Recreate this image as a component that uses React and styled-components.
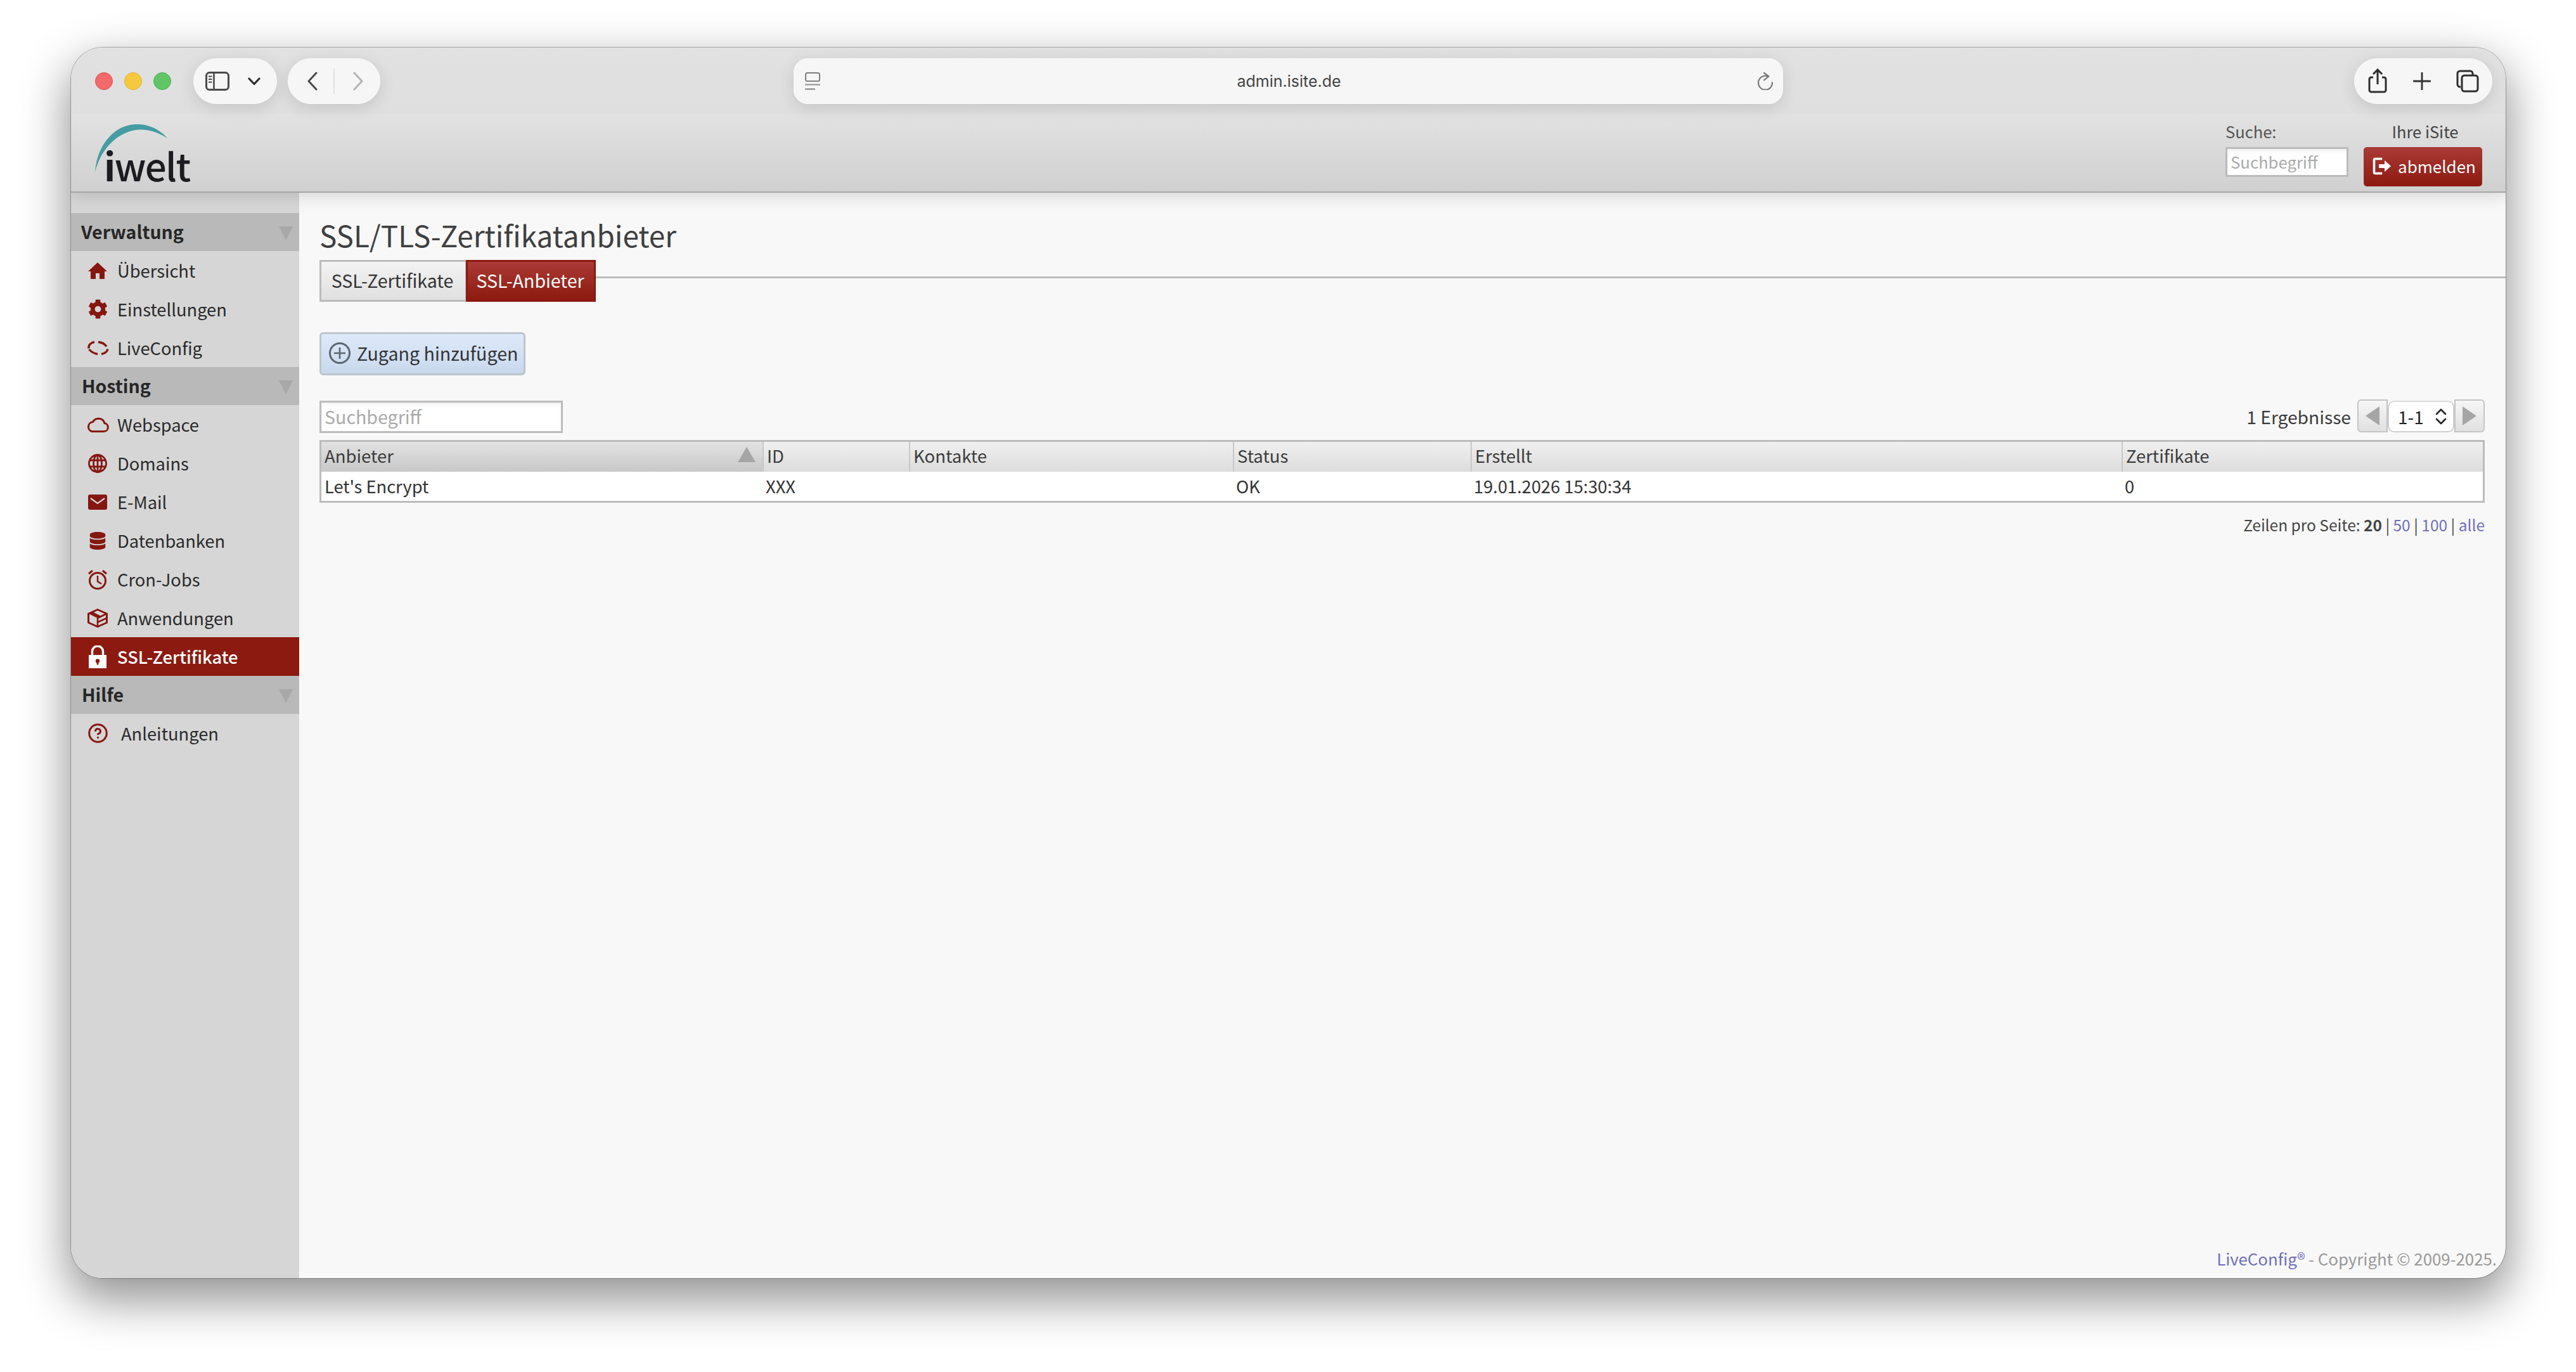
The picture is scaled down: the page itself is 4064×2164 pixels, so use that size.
import React from 'react';
import styled, { createGlobalStyle } from 'styled-components';
import { FaCog, FaDatabase } from 'react-icons/fa';
import { CircleHelp } from 'lucide-react';

const FONT = '"Noto Sans CJK SC", "Noto Sans", sans-serif';
const RED = '#8d1a10';
const ICON = '#851710';

const Global = createGlobalStyle`
  html, body { margin: 0; padding: 0; background: #fff; }
  body { font-family: ${FONT}; color: #333; }
  * { box-sizing: border-box; }
`;

const Desktop = styled.div`
  width: 4064px;
  height: 2164px;
  padding: 75px 111px 148px 112px;
  background: #fff;
  overflow: hidden;
`;
const Window = styled.div`
  width: 100%;
  height: 100%;
  display: flex;
  flex-direction: column;
  border-radius: 50px;
  overflow: hidden;
  background: #f8f8f8;
  box-shadow: 0 0 0 1px rgba(0,0,0,.28), 0 30px 72px 6px rgba(0,0,0,.42);
`;
const Top = styled.header`
  height: 229px;
  flex: none;
  background: linear-gradient(#e1e1e1 0, #dfdfdf 105px, #e2e2e2 105px, #d0d0d0 100%);
  border-bottom: 2px solid #a6a6a6;
  display: flex;
  flex-direction: column;
  position: relative;
  z-index: 2;
  box-shadow: 0 6px 24px rgba(0,0,0,.13);
`;
const BrowserBar = styled.div`
  display: grid;
  grid-template-columns: 1fr 1561px 1fr;
  align-items: center;
  padding: 17px 21px 0 21px;
  height: 89px;
  flex: none;
`;
const LeftCluster = styled.div`display: flex; align-items: center; padding-left: 17px;`;
const Light = styled.span`
  width: 28px;
  height: 28px;
  border-radius: 50%;
  margin-right: 18px;
  background: ${p => p.$c};
  border: 1px solid ${p => p.$b};
`;
const Pill = styled.div`
  height: 72px;
  width: ${p => p.$w}px;
  margin-left: ${p => p.$ml || 0}px;
  border-radius: 36px;
  background: #f6f6f6;
  border: 1.5px solid #fbfbfb;
  box-shadow: 0 6px 26px rgba(0,0,0,.12);
  display: flex;
  align-items: center;
  position: relative;
  flex: none;
`;
const UrlBar = styled(Pill)`
  width: 1561px;
  border-radius: 22px;
  justify-content: space-between;
  padding: 0 15px 0 17px;
`;
const UrlText = styled.span`
  font: 400 25px/30px Inter, sans-serif;
  color: #444;
`;
const RightPill = styled(Pill)`
  justify-self: end;
  justify-content: space-between;
  padding: 0 20px 0 20px;
`;
const Divider = styled.span`
  width: 2px;
  height: 40px;
  background: #e2e2e2;
`;
const PillSlot = styled.span`
  display: flex;
  margin-left: ${p => p.$ml}px;
`;
const SiteHeader = styled.div`
  flex: 1;
  display: flex;
  justify-content: space-between;
  padding: 0 37px 8px 38px;
  align-items: flex-end;
`;
const Logo = styled.svg`
  display: block;
  margin-bottom: -17px;
  filter: blur(.6px);
`;
const HeaderTools = styled.div`display: flex; gap: 24px; align-items: flex-start;`;
const ToolCol = styled.div`
  width: ${p => p.$w}px;
  display: flex;
  flex-direction: column;
  align-items: ${p => p.$center ? 'center' : 'flex-start'};
`;
const ToolLabel = styled.div`
  font-size: 25.5px;
  line-height: 32px;
  height: 41px;
  padding-left: ${p => p.$dark ? 7 : 0}px;
  color: ${p => p.$dark ? '#444' : '#555'};
`;
const SearchBox = styled.div`
  width: ${p => p.$w}px;
  height: ${p => p.$h}px;
  border: 3px solid #bcbcbc;
  background: #fff;
  box-shadow: inset 0 4px 5px rgba(0,0,0,.05);
  color: #aaa;
  font-size: ${p => p.$fs}px;
  line-height: ${p => p.$h - 8}px;
  padding-left: 5px;
  flex: none;
`;
const LogoutBtn = styled.div`
  width: 187px;
  height: 62px;
  border-radius: 5px;
  background: linear-gradient(#aa3a36, ${RED});
  border: 1.5px solid #a33;
  border-color: #a13a34 #952a22 #862018;
  color: #fff;
  font-size: 26px;
  display: flex;
  align-items: center;
  padding: 0 0 3px 11px;
  gap: 10px;
`;
const Body = styled.div`flex: 1; display: flex; min-height: 0;`;
const Sidebar = styled.nav`
  width: 360px;
  flex: none;
  background: #d6d6d6;
  padding-top: 32px;
`;
const GroupHead = styled.div`
  height: 60px;
  background: #b9b9b9;
  display: flex;
  align-items: center;
  justify-content: space-between;
  padding: 0 10px 3px ${p => p.$pad || 17}px;
  font-weight: 700;
  font-size: 28.5px;
  color: #262626;
`;
const HeadArrow = styled.span`
  width: 0;
  height: 0;
  border-left: 11px solid transparent;
  border-right: 11px solid transparent;
  border-top: 22px solid #a8a8a8;
  margin-top: 6px;
`;
const NavItem = styled.div`
  height: 61px;
  display: flex;
  align-items: center;
  padding-left: 26px;
  background: ${p => p.$active ? RED : 'transparent'};
  color: ${p => p.$active ? '#fff' : '#2a2a2a'};
  font-size: 27.3px;
  font-weight: ${p => p.$active ? 500 : 400};
`;
const NavLabel = styled.span`
  position: relative;
  top: -1px;
`;
const NavIcon = styled.span`
  width: 32px;
  height: 32px;
  margin-right: ${p => p.$gap || 15}px;
  display: flex;
  align-items: center;
  justify-content: center;
  flex: none;
  color: ${p => p.$active ? '#fff' : ICON};
  svg { flex: none; }
`;
const Main = styled.main`
  flex: 1;
  min-width: 0;
  display: flex;
  flex-direction: column;
  padding: 36px 33px 0 32px;
`;
const Title = styled.h1`
  margin: 0 0 10px;
  font-size: 45.8px;
  line-height: 60px;
  font-weight: 400;
  color: #3f3f3f;
`;
const TabRow = styled.div`
  display: flex;
  margin-right: -33px;
  margin-bottom: 48px;
`;
const Tab = styled.div`
  height: 66px;
  width: ${p => p.$w}px;
  text-align: center;
  font-size: 28.5px;
  line-height: 58px;
  border: 3px solid ${p => p.$active ? RED : '#bcbcbc'};
  border-right-width: ${p => p.$active ? 3 : 1.5}px;
  padding-right: ${p => p.$active ? 2 : 3}px;
  color: ${p => p.$active ? '#fff' : '#333'};
  background: ${p => p.$active ? `linear-gradient(#aa3a36, ${RED})` : 'linear-gradient(#f3f3f3, #e0e0e0)'};
`;
const TabLine = styled.div`
  flex: 1;
  height: 3px;
  margin-top: 26px;
  background: #bcbcbc;
`;
const AddBtn = styled.div`
  width: 325px;
  height: 68px;
  border: 3px solid #bcc4cc;
  border-radius: 6px;
  background: linear-gradient(#deeafa, #c8d8ec);
  display: flex;
  align-items: center;
  padding: 0 0 3px 11px;
  gap: 9px;
  font-size: 28.6px;
  color: #333;
  white-space: nowrap;
  svg { margin-top: 1px; }
`;
const ListBar = styled.div`
  display: flex;
  justify-content: space-between;
  align-items: flex-start;
  margin-top: 38px;
  height: 53px;
  margin-bottom: 11px;
`;
const SearchWrap = styled.div`padding-top: 2px;`;
const Pager = styled.div`display: flex; align-items: center; height: 52px;`;
const PagerText = styled.span`
  font-size: 28.2px;
  color: #3c3c3c;
  margin-right: 10px;
`;
const PagerBtn = styled.div`
  width: 48px;
  height: 52px;
  border: 2px solid #c4c4c4;
  border-radius: ${p => p.$left ? '6px 0 0 6px' : '0 6px 6px 0'};
  background: linear-gradient(#f6f6f6, #e0e0e0);
  display: flex;
  align-items: center;
  justify-content: center;
`;
const PagerTri = styled.span`
  width: 0;
  height: 0;
  border-top: 15px solid transparent;
  border-bottom: 15px solid transparent;
  ${p => p.$left ? 'border-right: 22px solid #a5a5a5;' : 'border-left: 22px solid #a5a5a5;'}
`;
const PagerSelect = styled.div`
  width: 105px;
  height: 50px;
  margin-top: 2px;
  background: #fff;
  border: 2px solid #cfcfcf;
  border-top-color: #d8d8d8;
  border-radius: 10px;
  display: flex;
  align-items: center;
  justify-content: space-between;
  padding: 0 10px 0 14px;
  font-size: 28px;
  color: #222;
`;
const Table = styled.div`
  border: 3px solid #bcbcbc;
  height: 99px;
  background: #fff;
`;
const Row = styled.div`
  display: grid;
  grid-template-columns: 696px 231px 511px 375px 1027px 1fr;
  height: ${p => p.$h}px;
`;
const HeadCell = styled.div`
  background: ${p => p.$sorted ? 'linear-gradient(#e2e2e2, #c8c8c8)' : 'linear-gradient(#f0f0f0, #dcdcdc)'};
  border-left: ${p => p.$first ? 0 : 2}px solid #c8c8c8;
  padding-left: 5px;
  font-size: 27.5px;
  line-height: 43px;
  color: #3c3c3c;
  display: flex;
  justify-content: space-between;
  padding-right: 11px;
`;
const SortTri = styled.span`
  width: 0;
  height: 0;
  margin-top: 8px;
  border-left: 14px solid transparent;
  border-right: 14px solid transparent;
  border-bottom: 24px solid #a5a5a5;
`;
const Cell = styled.div`
  padding-left: 5px;
  font-size: 27.3px;
  line-height: 44px;
  color: #333;
`;
const PerPage = styled.div`
  margin-top: 18px;
  text-align: right;
  font-size: 24.5px;
  line-height: 34px;
  color: #444;
`;
const PageLink = styled.span`color: #7070bb;`;
const Strong = styled.b`font-weight: 700;`;
const Copyright = styled.footer`
  margin-top: auto;
  margin-right: -19px;
  margin-bottom: 14px;
  text-align: right;
  font-size: 25.8px;
  line-height: 34px;
  color: #999;
`;

const I = ({ w, h, children, ...r }) => (
  <svg width={w} height={h} viewBox={`0 0 ${w} ${h}`} fill="none" {...r}>{children}</svg>
);

const SidebarIcon = () => (
  <I w={38} h={30}>
    <rect x="1.5" y="1.5" width="35" height="27" rx="5" stroke="#4a4a4a" strokeWidth="3" />
    <path d="M13.5 2v26" stroke="#4a4a4a" strokeWidth="2.6" />
    <path d="M5 7.5h5.5M5 12h5.5M5 16.5h5.5" stroke="#4a4a4a" strokeWidth="1.8" />
  </I>
);
const Chev = ({ d, c, w = 3, W = 20, H = 30 }) => (
  <I w={W} h={H}><path d={d} stroke={c} strokeWidth={w} strokeLinecap="round" strokeLinejoin="round" /></I>
);
const ShareIcon = () => (
  <I w={32} h={40}>
    <path d="M9 14H6a3 3 0 0 0-3 3v17a3 3 0 0 0 3 3h20a3 3 0 0 0 3-3V17a3 3 0 0 0-3-3h-3" stroke="#2e2e2e" strokeWidth="3" />
    <path d="M16 25V3M9 9l7-7 7 7" stroke="#2e2e2e" strokeWidth="3" />
  </I>
);
const PlusIcon = () => (
  <I w={28} h={28}><path d="M14 1v26M1 14h26" stroke="#333" strokeWidth="2.8" strokeLinecap="round" /></I>
);
const TabsIcon = () => (
  <I w={36} h={36}>
    <path d="M7 27H6a4 4 0 0 1-4-4V6a4 4 0 0 1 4-4h16a4 4 0 0 1 4 4v2" stroke="#2e2e2e" strokeWidth="3" />
    <rect x="9" y="9" width="25" height="25" rx="4" stroke="#2e2e2e" strokeWidth="3" />
  </I>
);
const ReaderIcon = () => (
  <I w={24} h={28}>
    <rect x="1" y="1" width="22" height="13" rx="2.5" stroke="#808080" strokeWidth="2" />
    <path d="M0 19.5h24" stroke="#909090" strokeWidth="2" />
    <path d="M0 26.5h16" stroke="#808080" strokeWidth="2" />
  </I>
);
const ReloadIcon = () => (
  <I w={24} h={28}>
    <path d="M15.5 6.2A11 11 0 1 0 23 16" stroke="#777" strokeWidth="2.2" strokeLinecap="round" />
    <path d="M10 .8 17.5 6.5 10 12.3" stroke="#777" strokeWidth="2.2" strokeLinecap="round" strokeLinejoin="round" />
  </I>
);
const LogoMark = () => (
  <Logo width="170" height="116" viewBox="0 0 170 116">
    <path d="M0 76C2 40 26 3 63 1c21-1 39 8 51 22C98 13 82 8 65 10 35 14 9 40 0 76Z" fill="#459ca3" />
    <text x="14" y="91" fontFamily='"Noto Sans CJK SC", sans-serif' fontSize="60" letterSpacing="-1.5" fill="#1b1b20"><tspan fontWeight="700">i</tspan><tspan fontWeight="500">welt</tspan></text>
  </Logo>
);
const LogoutIcon = () => (
  <I w={32} h={32}>
    <path d="M17 3H6a3 3 0 0 0-3 3v20a3 3 0 0 0 3 3h11v-3H6V6h11V3Z" fill="#fff" stroke="#fff" strokeWidth=".6" />
    <path d="M12 13h9V7l10 9-10 9v-6h-9Z" fill="#fff" />
  </I>
);
const HomeIcon = () => (
  <I w={30} h={26}><path d="M15 0 30 14h-4v12h-8v-9h-6v9H4V14H0Z" fill={ICON} /></I>
);
const GlobeIcon = () => (
  <I w={30} h={30}>
    <g stroke={ICON} strokeWidth="2.8">
      <circle cx="15" cy="15" r="13.5" />
      <ellipse cx="15" cy="15" rx="6.5" ry="13.5" />
      <path d="M2.5 10h25M2.5 20h25M15 1.5v27" />
    </g>
  </I>
);
const CloudIcon = () => (
  <I w={36} h={25}>
    <path d="M9 23.5h19a6.5 6.5 0 0 0 1-12.9A10 10 0 0 0 10.5 8.6 7.6 7.6 0 0 0 9 23.5Z" stroke={ICON} strokeWidth="3" />
  </I>
);
const MailIcon = () => (
  <I w={30} h={24}>
    <rect width="30" height="24" rx="3" fill={ICON} />
    <path d="M4 6l11 8 11-8" stroke="#d6d6d6" strokeWidth="2.2" />
  </I>
);
const LiveIcon = () => (
  <I w={36} h={24}>
    <g stroke={ICON} strokeWidth="3.4" fill="none" strokeLinecap="butt">
      <path d="M4 12.5C3 7 8 3 13 2.5" />
      <path d="M19 2.5C25 3 29 5 32 9.5" />
      <path d="M4.5 14C8 18 12 20.5 18 21.5" />
      <path d="M24 21.5C29 20.5 33 18 34 13.5" />
    </g>
  </I>
);
const ClockIcon = () => (
  <I w={30} h={32}>
    <g stroke={ICON}>
      <circle cx="15" cy="18" r="12.5" strokeWidth="3" />
      <path d="M1 7l6-5M29 7l-6-5" strokeWidth="3" />
      <path d="M15 10v9l6 4" strokeWidth="2.4" />
    </g>
  </I>
);
const BoxIcon = () => (
  <I w={32} h={30}>
    <path d="M16 1.5 30.5 8v14L16 28.5 1.5 22V8Z" stroke={ICON} strokeWidth="3" strokeLinejoin="round" />
    <path d="M16 1 2 8l14 7 6-3L10 6Z" fill={ICON} />
    <path d="M16 15v13M16 15l14-7M17 21l13-6" stroke={ICON} strokeWidth="2.6" />
  </I>
);
const LockIcon = () => (
  <I w={28} h={36}>
    <path d="M5.5 16v-6.5a8.5 8.5 0 0 1 17 0V16" stroke="#fff" strokeWidth="3.4" />
    <rect y="15" width="28" height="21" fill="#fff" />
    <circle cx="14" cy="24.5" r="3.2" fill={RED} />
    <rect x="12.6" y="24.5" width="2.8" height="6" fill={RED} />
  </I>
);
const PlusCircle = () => (
  <I w={36} h={36}>
    <circle cx="18" cy="18" r="15.5" stroke="#5d6670" strokeWidth="3" />
    <path d="M18 9v18M9 18h18" stroke="#5d6670" strokeWidth="2.6" />
  </I>
);
const UpDown = () => (
  <I w={18} h={28}>
    <path d="M2 10l7-7 7 7M2 18l7 7 7-7" stroke="#222" strokeWidth="2.6" strokeLinecap="round" strokeLinejoin="round" />
  </I>
);

const navGroups = [
  { title: 'Verwaltung', pad: 16, items: [
    { label: 'Übersicht', icon: <HomeIcon /> },
    { label: 'Einstellungen', icon: <FaCog size={31} /> },
    { label: 'LiveConfig', icon: <LiveIcon /> },
  ]},
  { title: 'Hosting', pad: 17, items: [
    { label: 'Webspace', icon: <CloudIcon /> },
    { label: 'Domains', icon: <GlobeIcon /> },
    { label: 'E-Mail', icon: <MailIcon /> },
    { label: 'Datenbanken', icon: <FaDatabase size={28} /> },
    { label: 'Cron-Jobs', icon: <ClockIcon /> },
    { label: 'Anwendungen', icon: <BoxIcon /> },
    { label: 'SSL-Zertifikate', icon: <LockIcon />, active: true },
  ]},
  { title: 'Hilfe', pad: 17, items: [
    { label: 'Anleitungen', icon: <CircleHelp size={33} strokeWidth={2.2} />, gap: 21 },
  ]},
];

const columns = ['Anbieter', 'ID', 'Kontakte', 'Status', 'Erstellt', 'Zertifikate'];
const row = ["Let's Encrypt", 'XXX', '', 'OK', '19.01.2026 15:30:34', '0'];

export default function App() {
  return (
    <>
      <Global />
      <Desktop>
        <Window>
          <Top>
            <BrowserBar>
              <LeftCluster>
                <Light $c="#f26a6a" $b="#e05050" />
                <Light $c="#f5c93e" $b="#e2b22e" />
                <Light $c="#60c566" $b="#4cb052" />
                <Pill $w={132} $ml={17}>
                  <PillSlot $ml={18}><SidebarIcon /></PillSlot>
                  <PillSlot $ml={29}><Chev W={20} H={13} w={3.2} c="#2e2e2e" d="M2 2l8 8.5L18 2" /></PillSlot>
                </Pill>
                <Pill $w={146} $ml={17}>
                  <PillSlot $ml={28}><Chev c="#4a4a4a" d="M16 2 4 15l12 13" /></PillSlot>
                  <PillSlot $ml={23}><Divider /></PillSlot>
                  <PillSlot $ml={27}><Chev c="#b4b4b4" d="M4 2l12 13L4 28" /></PillSlot>
                </Pill>
              </LeftCluster>
              <UrlBar>
                <ReaderIcon />
                <UrlText>admin.isite.de</UrlText>
                <ReloadIcon />
              </UrlBar>
              <RightPill $w={218}>
                <ShareIcon />
                <PlusIcon />
                <TabsIcon />
              </RightPill>
            </BrowserBar>
            <SiteHeader>
              <LogoMark />
              <HeaderTools>
                <ToolCol $w={194}>
                  <ToolLabel>Suche:</ToolLabel>
                  <SearchBox $w={194} $h={47} $fs={25.7}>Suchbegriff</SearchBox>
                </ToolCol>
                <ToolCol $w={187} $center>
                  <ToolLabel $dark>Ihre iSite</ToolLabel>
                  <LogoutBtn><LogoutIcon />abmelden</LogoutBtn>
                </ToolCol>
              </HeaderTools>
            </SiteHeader>
          </Top>
          <Body>
            <Sidebar>
              {navGroups.map(g => (
                <React.Fragment key={g.title}>
                  <GroupHead $pad={g.pad}>{g.title}<HeadArrow /></GroupHead>
                  {g.items.map(it => (
                    <NavItem key={it.label} $active={it.active}>
                      <NavIcon $active={it.active} $gap={it.gap}>{it.icon}</NavIcon>
                      <NavLabel>{it.label}</NavLabel>
                    </NavItem>
                  ))}
                </React.Fragment>
              ))}
            </Sidebar>
            <Main>
              <Title>SSL/TLS-Zertifikatanbieter</Title>
              <TabRow>
                <Tab $w={231}>SSL-Zertifikate</Tab>
                <Tab $w={205} $active>SSL-Anbieter</Tab>
                <TabLine />
              </TabRow>
              <AddBtn><PlusCircle />Zugang hinzufügen</AddBtn>
              <ListBar>
                <SearchWrap><SearchBox $w={384} $h={51} $fs={28.6}>Suchbegriff</SearchBox></SearchWrap>
                <Pager>
                  <PagerText>1 Ergebnisse</PagerText>
                  <PagerBtn $left><PagerTri $left /></PagerBtn>
                  <PagerSelect>1-1<UpDown /></PagerSelect>
                  <PagerBtn><PagerTri /></PagerBtn>
                </Pager>
              </ListBar>
              <Table>
                <Row $h={47}>
                  {columns.map((c, i) => (
                    <HeadCell key={c} $first={i === 0} $sorted={i === 0}>
                      {c}{i === 0 && <SortTri />}
                    </HeadCell>
                  ))}
                </Row>
                <Row $h={46}>
                  {row.map((c, i) => <Cell key={i}>{c}</Cell>)}
                </Row>
              </Table>
              <PerPage>
                Zeilen pro Seite: <Strong>20</Strong> | <PageLink>50</PageLink> | <PageLink>100</PageLink> | <PageLink>alle</PageLink>
              </PerPage>
              <Copyright><PageLink>LiveConfig®</PageLink> - Copyright © 2009-2025.</Copyright>
            </Main>
          </Body>
        </Window>
      </Desktop>
    </>
  );
}
